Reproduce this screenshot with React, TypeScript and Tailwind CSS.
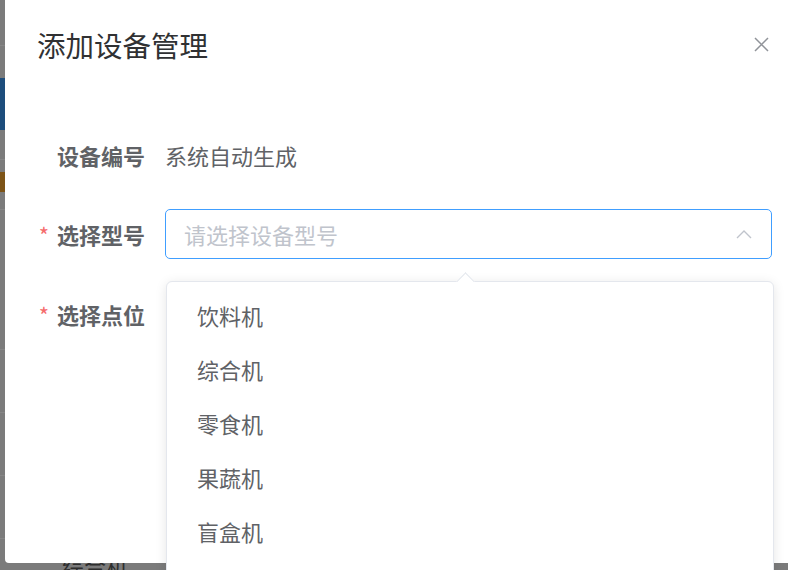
import React from "react";

const font = { fontFamily: '"Noto Sans CJK SC", "Noto Sans", sans-serif' };

export default function App() {
  const items = ["饮料机", "综合机", "零食机", "果蔬机", "盲盒机"];
  return (
    <div className="relative w-[788px] h-[570px] overflow-hidden bg-[#7b7b7b]" style={font}>
      {/* dimmed background page */}
      <div className="flex flex-col">
        <div className="h-[46px] border-b border-[#868686]" />
        <div className="h-[32px]" />
        <div className="h-[52px] bg-[#1d4d7c]" />
        <div className="h-[30px] border-b border-[#868686]" />
        <div className="h-[50px] border-b border-[#868686] flex items-start pt-[12px]">
          <div className="w-[12px] h-[20px] bg-[#7d5417]" />
        </div>
        <div className="h-[140px] border-b border-[#868686]" />
        <div className="h-[63px] border-b border-[#868686]" />
        <div className="h-[63px] border-b border-[#868686]" />
        <div className="h-[63px] border-b border-[#868686]" />
        <div className="h-[60px] pl-[62px] pt-[11px] text-[22px] leading-[30px] text-[#2e2e2e]">综合机</div>
      </div>

      {/* dialog */}
      <div className="absolute left-[5px] top-[-10px] w-[820px] h-[573px] bg-white rounded-[4px]">
        <div className="pt-[34px] pl-[32px] text-[28.5px] leading-[42px] text-[#303133]">添加设备管理</div>
        <div className="absolute left-[749px] top-[47px] w-[15px] h-[15px]">
          <svg width="15" height="15" viewBox="0 0 15 15">
            <path d="M1 1 L14 14 M14 1 L1 14" stroke="#909399" strokeWidth="1.5" fill="none" />
          </svg>
        </div>

        <div className="mt-[64px] flex flex-col gap-[29px]">
          <div className="flex items-center h-[50px]">
            <div className="w-[160px] pr-[20px] text-right text-[22px] leading-[30px] font-bold text-[#606266]">设备编号</div>
            <div className="text-[22px] leading-[30px] text-[#606266]">系统自动生成</div>
          </div>
          <div className="flex items-center h-[50px]">
            <div className="w-[160px] pr-[20px] text-right text-[22px] leading-[30px] font-bold text-[#606266]">
              <span className="text-[#f56c6c] mr-[8px] font-normal">*</span>选择型号
            </div>
            <div className="w-[607px] h-[50px] border border-[#409eff] rounded-[5px] flex items-center justify-between pl-[18px] pr-[19px]">
              <span className="text-[22px] leading-[30px] text-[#c0c4cc]">请选择设备型号</span>
              <svg width="16" height="9" viewBox="0 0 16 9">
                <path d="M1 8 L8 1 L15 8" stroke="#c0c4cc" strokeWidth="1.4" fill="none" />
              </svg>
            </div>
          </div>
          <div className="flex items-center h-[50px] mt-[1px]">
            <div className="w-[160px] pr-[20px] text-right text-[22px] leading-[30px] font-bold text-[#606266]">
              <span className="text-[#f56c6c] mr-[8px] font-normal">*</span>选择点位
            </div>
          </div>
        </div>
      </div>

      {/* dropdown popper */}
      <div className="absolute left-[166px] top-[281px] w-[608px] h-[320px] bg-white border border-[#e4e7ed] rounded-[6px] shadow-[0_2px_12px_0_rgba(0,0,0,0.1)]">
        <div className="absolute left-[292px] top-[-7px] w-[13px] h-[13px] bg-white border-l border-t border-[#e4e7ed] rotate-45" />
        <div className="flex flex-col pt-[6px]">
          {items.map((t) => (
            <div key={t} className="h-[54px] flex items-center pl-[30px] text-[22px] leading-[30px] text-[#606266]">
              {t}
            </div>
          ))}
        </div>
      </div>
    </div>
  );
}
